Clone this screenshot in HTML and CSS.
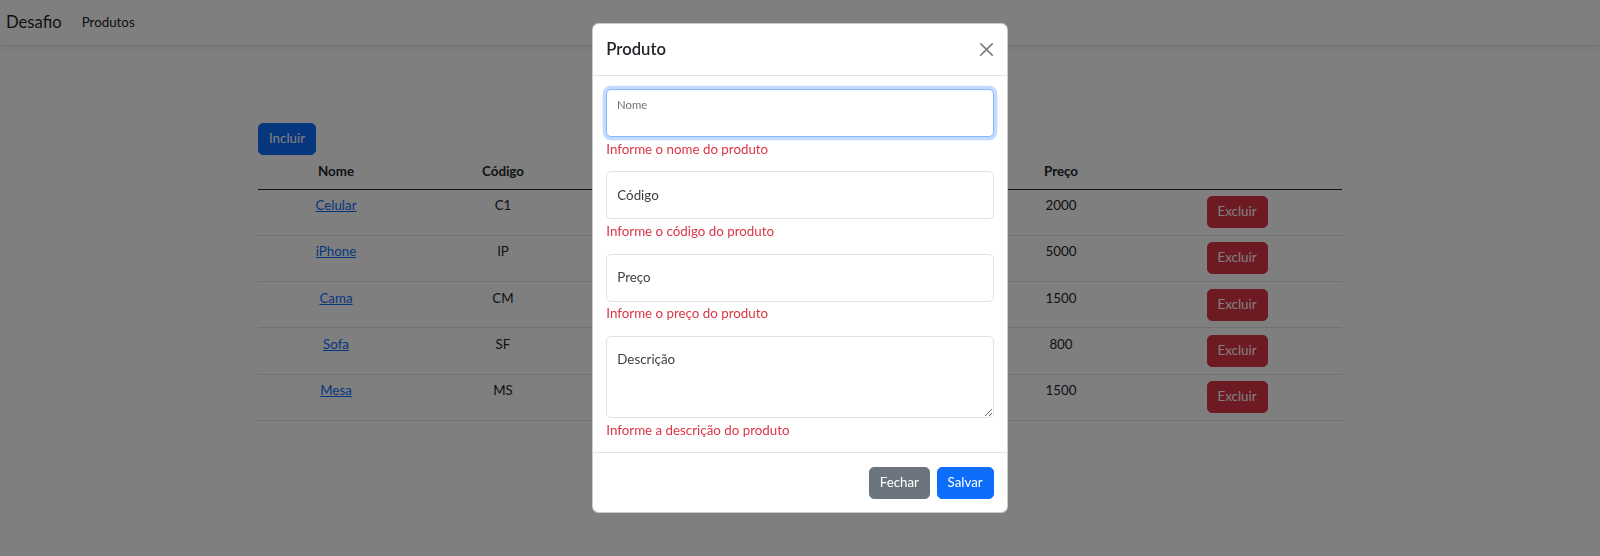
FILE: index.html
```html
<!DOCTYPE html>
<html lang="pt-BR">
<head>
    <meta charset="UTF-8">
    <meta name="viewport" content="width=device-width, initial-scale=1.0">
    <title>Produtos - Desafio</title>
<link rel="stylesheet" href="styles.css">
</head>
<body>
  <nav class="navbar">
    <a class="navbar-brand" href="#">Desafio</a>
    <a class="nav-link" href="#">Produtos</a>
  </nav>

  <main class="container">
    <button class="btn btn-primary" type="button">Incluir</button>
    <table class="table">
      <colgroup>
        <col class="col-nome">
        <col class="col-codigo">
        <col class="col-descricao">
        <col class="col-preco">
        <col class="col-acoes">
      </colgroup>
      <thead>
        <tr><th>Nome</th><th>Código</th><th>Descrição</th><th>Preço</th><th></th></tr>
      </thead>
      <tbody>
        <tr><td><a href="#">Celular</a></td><td>C1</td><td>Celular</td><td>2000</td><td><button class="btn btn-danger" type="button">Excluir</button></td></tr>
        <tr><td><a href="#">iPhone</a></td><td>IP</td><td>iPhone</td><td>5000</td><td><button class="btn btn-danger" type="button">Excluir</button></td></tr>
        <tr><td><a href="#">Cama</a></td><td>CM</td><td>Cama</td><td>1500</td><td><button class="btn btn-danger" type="button">Excluir</button></td></tr>
        <tr><td><a href="#">Sofa</a></td><td>SF</td><td>Sofa</td><td>800</td><td><button class="btn btn-danger" type="button">Excluir</button></td></tr>
        <tr><td><a href="#">Mesa</a></td><td>MS</td><td>Mesa</td><td>1500</td><td><button class="btn btn-danger" type="button">Excluir</button></td></tr>
      </tbody>
    </table>
  </main>

  <!-- modal de cadastro -->
  <div class="modal-backdrop"></div>
  <div class="modal">
    <div class="modal-dialog">
      <form class="modal-content">
        <div class="modal-header">
          <h5 class="modal-title">Produto</h5>
          <button type="button" class="btn-close" aria-label="Close">
            <svg viewBox="0 0 16 16" width="13" height="13"><path d="M.293.293a1 1 0 0 1 1.414 0L8 6.586 14.293.293a1 1 0 1 1 1.414 1.414L9.414 8l6.293 6.293a1 1 0 0 1-1.414 1.414L8 9.414l-6.293 6.293a1 1 0 0 1-1.414-1.414L6.586 8 .293 1.707a1 1 0 0 1 0-1.414z"/></svg>
          </button>
        </div>
        <div class="modal-body">
          <div class="field mb-3">
            <div class="form-floating">
              <input type="text" class="form-control focused" id="nome">
              <label for="nome" class="floated">Nome</label>
            </div>
            <div class="invalid-feedback">Informe o nome do produto</div>
          </div>
          <div class="field mb-3">
            <div class="form-floating">
              <input type="text" class="form-control" id="codigo">
              <label for="codigo">Código</label>
            </div>
            <div class="invalid-feedback">Informe o código do produto</div>
          </div>
          <div class="field mb-3">
            <div class="form-floating">
              <input type="text" class="form-control" id="preco">
              <label for="preco">Preço</label>
            </div>
            <div class="invalid-feedback">Informe o preço do produto</div>
          </div>
          <div class="field">
            <div class="form-floating">
              <textarea class="form-control area" id="descricao"></textarea>
              <label for="descricao">Descrição</label>
            </div>
            <div class="invalid-feedback">Informe a descrição do produto</div>
          </div>
        </div>
        <div class="modal-footer">
          <button type="button" class="btn btn-secondary">Fechar</button>
          <button type="submit" class="btn btn-primary">Salvar</button>
        </div>
      </form>
    </div>
  </div>
</body>
</html>
```

FILE: styles.css
```css
html {
  font-size: 13.333px;
}
body {
  margin: 0;
  font-family: Lato, "Open Sans", sans-serif;
  font-size: 1rem;
  line-height: 1.5;
  color: #212529;
  background: #fff;
}
a {
  color: #0d6efd;
}
.navbar {
  display: flex;
  align-items: center;
  padding: 6px 0 6px 6px;
  background: #fff;
  border-bottom: 1px solid #dee2e6;
  box-shadow: 0 .25rem .75rem rgba(0, 0, 0, .05);
}
.navbar-brand {
  font-size: 1.25rem;
  padding: .3125rem 0;
  margin-right: 1rem;
  color: rgba(0, 0, 0, .9);
  text-decoration: none;
}
.nav-link {
  padding: .5rem;
  color: #212529;
  text-decoration: none;
}
.container {
  width: 1084px;
  margin: 77px auto 0;
}
.btn {
  display: inline-block;
  font-family: inherit;
  font-size: 1rem;
  line-height: 1.5;
  padding: .375rem .75rem;
  border: 1px solid transparent;
  border-radius: .375rem;
  color: #fff;
  cursor: pointer;
}
.btn-primary {
  background: #0d6efd;
  border-color: #0d6efd;
}
.btn-danger {
  background: #dc3545;
  border-color: #dc3545;
}
.btn-secondary {
  background: #6c757d;
  border-color: #6c757d;
}
.table {
  width: 100%;
  table-layout: fixed;
  border-collapse: collapse;
  text-align: center;
}
.col-nome { width: 156px; }
.col-codigo { width: 178px; }
.col-descricao { width: 398px; }
.col-preco { width: 142px; }
.col-acoes { width: 210px; }
.table th,
.table td {
  padding: .5rem;
  vertical-align: top;
}
.table th {
  font-weight: 700;
  border-bottom: 1px solid #212529;
}
.table td {
  border-bottom: 1px solid #dee2e6;
}

/* modal */
.modal-backdrop {
  position: fixed;
  inset: 0;
  background: rgba(0, 0, 0, .5);
}
.modal {
  position: fixed;
  inset: 0;
}
.modal-dialog {
  width: 416px;
  margin: 23px auto;
}
.modal-content {
  background: #fff;
  border: 1px solid rgba(0, 0, 0, .2);
  border-radius: .5rem;
}
.modal-header {
  display: flex;
  align-items: center;
  padding: 13px 1rem;
  border-bottom: 1px solid #dee2e6;
}
.modal-title {
  margin: 0;
  font-size: 1.25rem;
  font-weight: 600;
  line-height: 25px;
}
.btn-close {
  display: flex;
  align-items: center;
  justify-content: center;
  width: 20px;
  height: 20px;
  margin: 0 -3px 0 auto;
  padding: 0;
  border: 0;
  background: none;
  opacity: .5;
}
.modal-body {
  padding: 1rem;
}
.mb-3 {
  margin-bottom: 1rem;
}
.form-floating {
  position: relative;
}
.form-control {
  display: block;
  box-sizing: border-box;
  width: 100%;
  height: 48px;
  padding: 1rem .75rem;
  font-family: inherit;
  font-size: 1rem;
  line-height: 1.25;
  color: #212529;
  background: #fff;
  border: 1px solid #dee2e6;
  border-radius: .375rem;
  outline: none;
}
.form-control.focused {
  border-color: #86b7fe;
  box-shadow: 0 0 0 .25rem rgba(13, 110, 253, .25);
}
.form-control.area {
  height: 82.5px;
  resize: vertical;
}
.form-floating label {
  position: absolute;
  top: 0;
  left: 0;
  padding: 1rem .75rem;
  border: 1px solid transparent;
  line-height: 1.5;
  color: #3a3e42;
  transform-origin: 0 0;
  pointer-events: none;
}
.form-floating label.floated {
  color: rgba(33, 37, 41, .65);
  transform: scale(.85) translateY(-.3rem) translateX(.15rem);
}
.invalid-feedback {
  margin-top: .25rem;
  font-size: 1rem;
  line-height: 17.5px;
  color: #dc3545;
}
.modal-footer {
  display: flex;
  justify-content: flex-end;
  padding: .75rem;
  border-top: 1px solid #dee2e6;
}
.modal-footer .btn {
  margin: .25rem;
}
```
